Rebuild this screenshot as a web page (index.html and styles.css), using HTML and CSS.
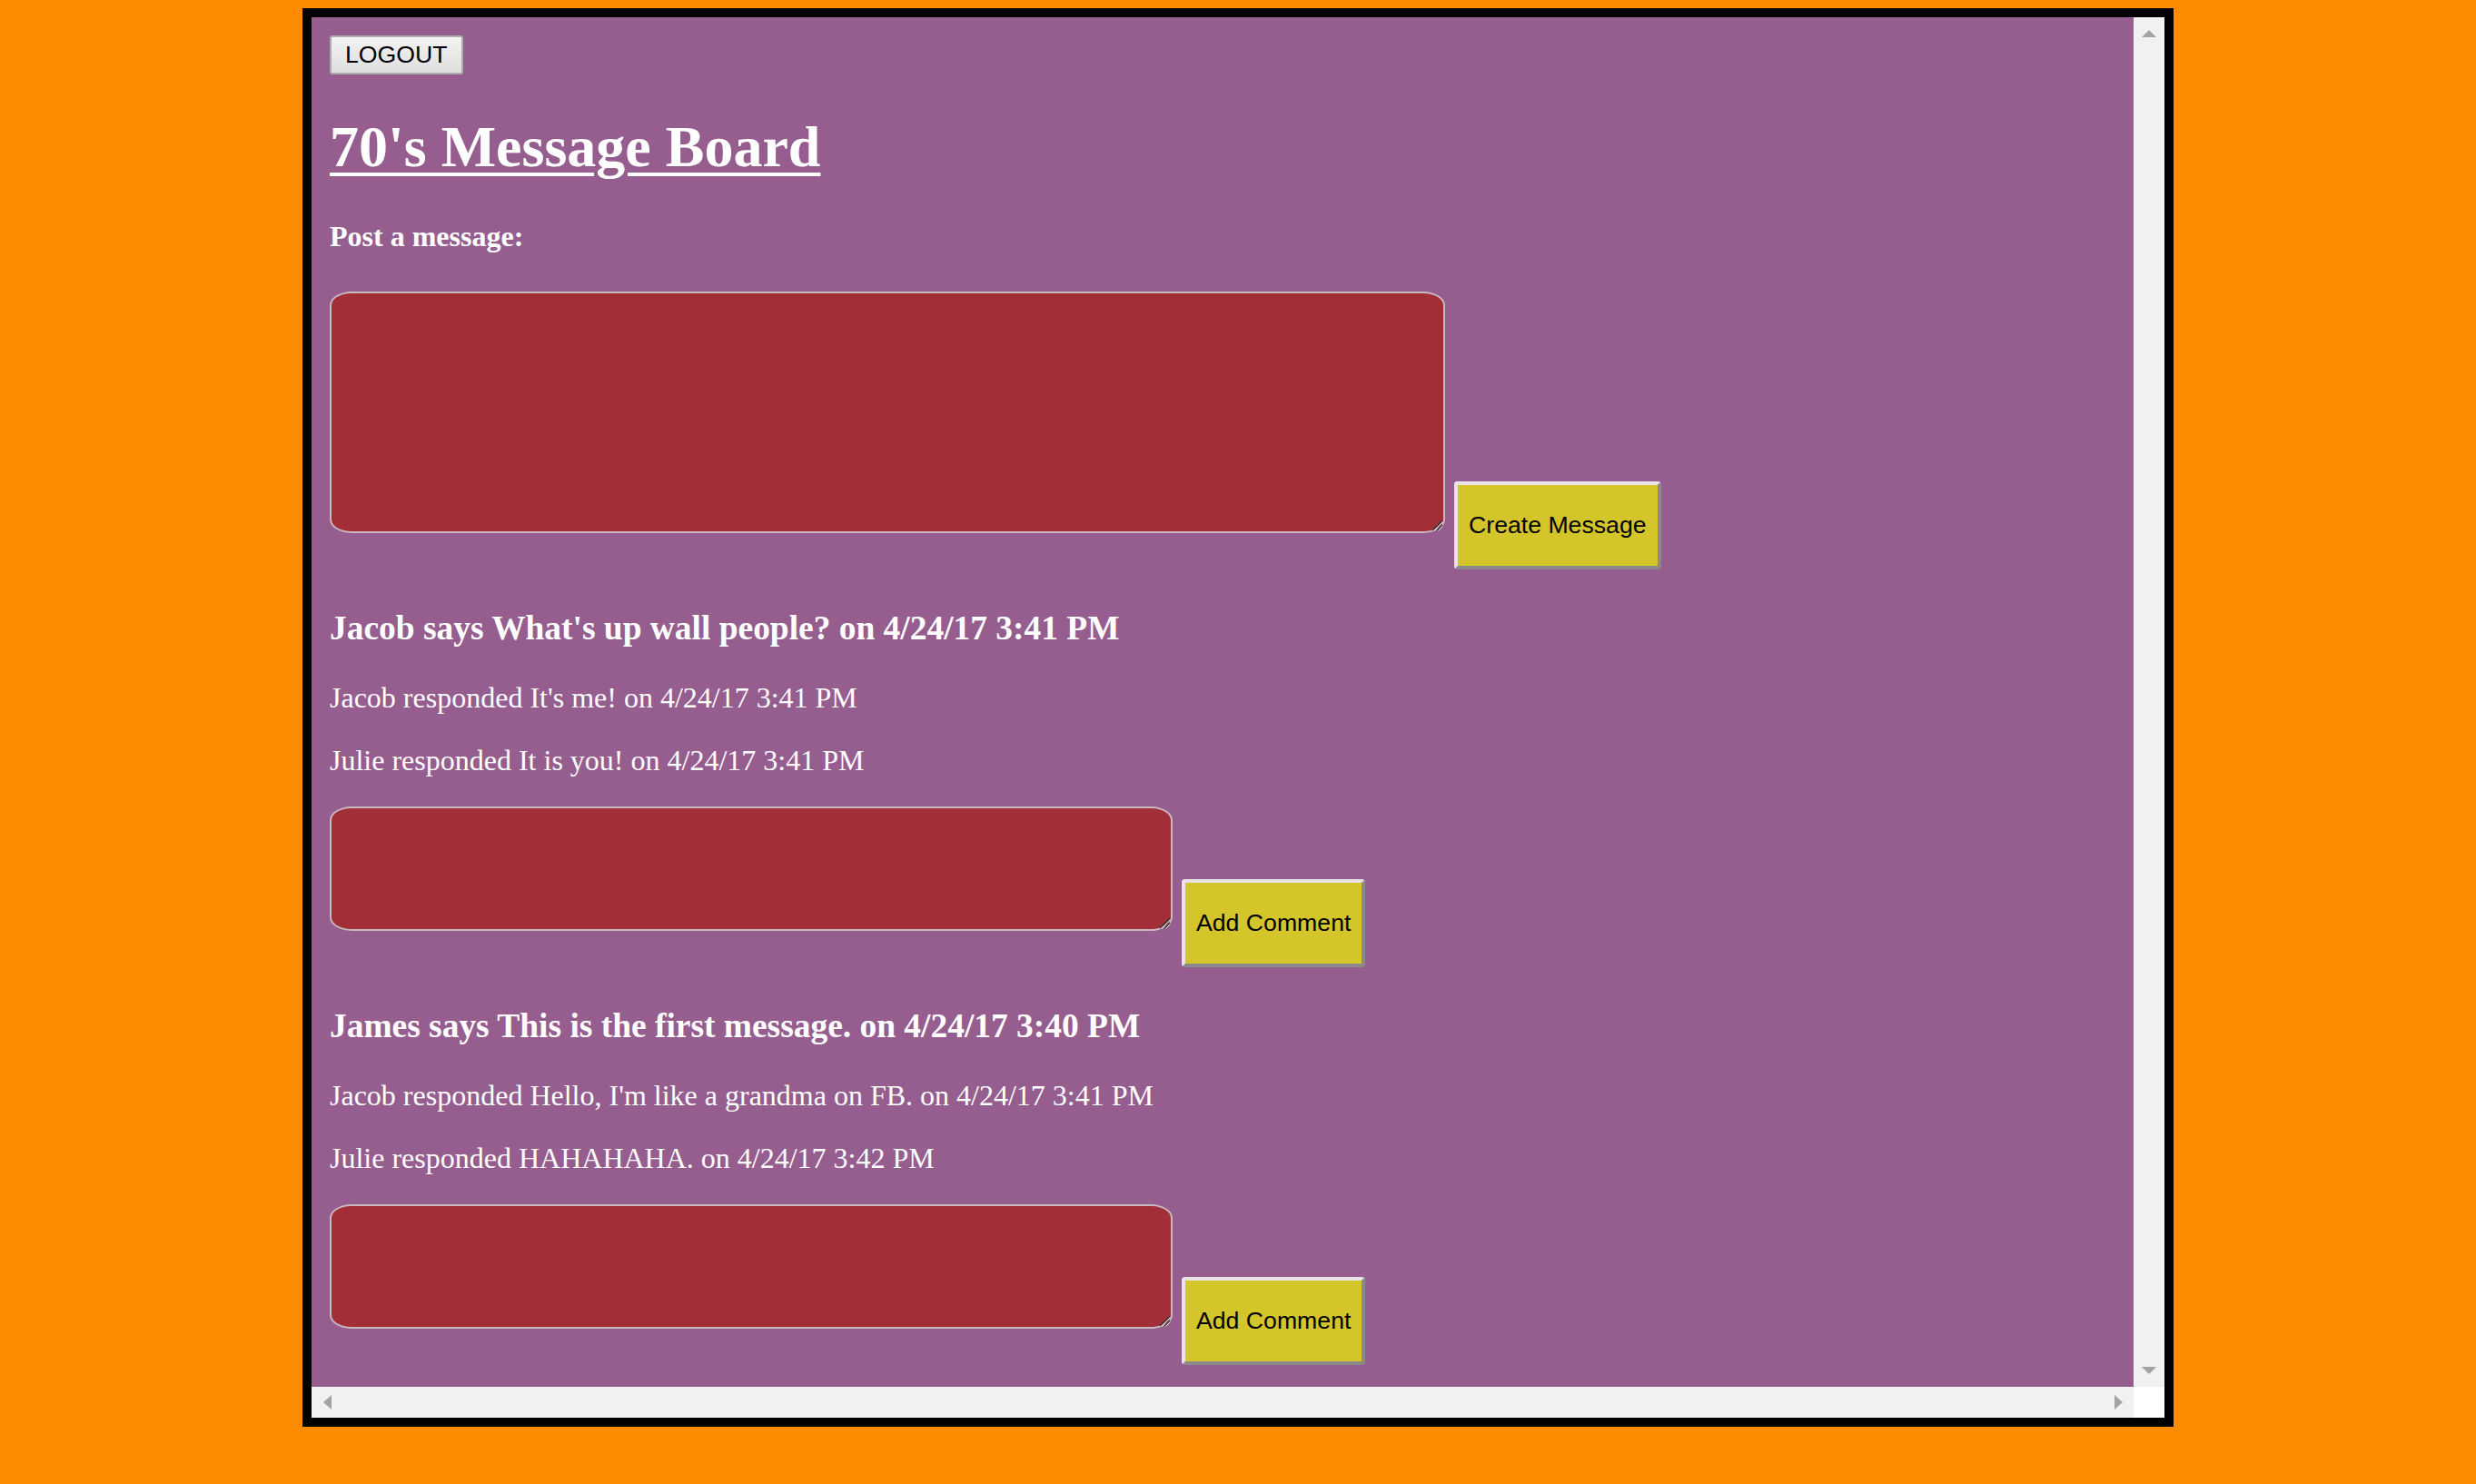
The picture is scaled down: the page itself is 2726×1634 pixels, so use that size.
FILE: index.html
```html
<!DOCTYPE html>
<html>
<head>
<meta charset="utf-8">
<title>70's Message Board</title>
<link rel="stylesheet" href="styles.css">
</head>
<body>
<div class="frame">
  <div class="viewport">
    <div class="topbar"><button class="logout">LOGOUT</button></div>
    <h1 class="title">70's Message Board</h1>
    <h4 class="label">Post a message:</h4>
    <form class="post-form"><span class="ta-wrap"><textarea class="ta-big"></textarea><svg class="grip" width="14" height="14" viewBox="0 0 14 14"><path d="M2 13 L13 2 M7 13 L13 7" stroke="#3a3a3a" stroke-width="1.5" fill="none"/><path d="M3.5 13.5 L13.5 3.5 M8.5 13.5 L13.5 8.5" stroke="#e8e8e8" stroke-width="1" fill="none"/></svg></span> <button type="button" class="btn-yellow">Create Message</button></form>

    <div class="message">
      <h3 class="msg-head">Jacob says What's up wall people? on 4/24/17 3:41 PM</h3>
      <p class="comment">Jacob responded It's me! on 4/24/17 3:41 PM</p>
      <p class="comment">Julie responded It is you! on 4/24/17 3:41 PM</p>
      <form class="comment-form"><span class="ta-wrap"><textarea class="ta-small"></textarea><svg class="grip" width="14" height="14" viewBox="0 0 14 14"><path d="M2 13 L13 2 M7 13 L13 7" stroke="#3a3a3a" stroke-width="1.5" fill="none"/><path d="M3.5 13.5 L13.5 3.5 M8.5 13.5 L13.5 8.5" stroke="#e8e8e8" stroke-width="1" fill="none"/></svg></span> <button type="button" class="btn-yellow">Add Comment</button></form>
    </div>

    <div class="message">
      <h3 class="msg-head">James says This is the first message. on 4/24/17 3:40 PM</h3>
      <p class="comment">Jacob responded Hello, I'm like a grandma on FB. on 4/24/17 3:41 PM</p>
      <p class="comment">Julie responded HAHAHAHA. on 4/24/17 3:42 PM</p>
      <form class="comment-form"><span class="ta-wrap"><textarea class="ta-small"></textarea><svg class="grip" width="14" height="14" viewBox="0 0 14 14"><path d="M2 13 L13 2 M7 13 L13 7" stroke="#3a3a3a" stroke-width="1.5" fill="none"/><path d="M3.5 13.5 L13.5 3.5 M8.5 13.5 L13.5 8.5" stroke="#e8e8e8" stroke-width="1" fill="none"/></svg></span> <button type="button" class="btn-yellow">Add Comment</button></form>
    </div>
  </div>
  <div class="vbar"><span class="arr arr-up"></span><span class="arr arr-down"></span></div>
  <div class="hbar"><span class="arr arr-left"></span><span class="arr arr-right"></span></div>
  <div class="corner"></div>
</div>
</body>
</html>
```
FILE: styles.css
```css
html, body {
  margin: 0;
  padding: 0;
}
body {
  background: #ff8c00;
  padding-top: 9px;
  font-family: "Liberation Serif", "Times New Roman", serif;
  font-size: 32px;
  color: #fff;
}
.frame {
  box-sizing: border-box;
  width: 2060px;
  margin: 0 auto;
  border: 10px solid #000;
  display: grid;
  grid-template-columns: 2006px 34px;
  grid-template-rows: 1508px 34px;
}
.viewport {
  background: #965e8f;
  overflow: hidden;
  padding: 20px;
}
.topbar {
  display: block;
}
.logout {
  display: block;
  box-sizing: border-box;
  height: 43px;
  margin: 0;
  font-family: "Liberation Sans", Arial, sans-serif;
  font-size: 26.67px;
  color: #000;
  padding: 0 15px;
  border: 2px solid #adadad;
  border-radius: 3px;
  background: linear-gradient(#f3f3f3, #dedede);
}
.title {
  font-size: 64px;
  font-weight: bold;
  margin: 42.88px 0;
  text-decoration: underline;
  text-decoration-thickness: 4px;
  text-underline-offset: 7px;
}
.label {
  font-size: 32px;
  font-weight: bold;
  margin: 42.56px 0;
}
.post-form, .comment-form {
  margin: 0;
  padding-bottom: 5px;
}
.ta-wrap {
  position: relative;
  display: inline-block;
  vertical-align: baseline;
}
textarea {
  display: block;
  box-sizing: border-box;
  margin: 0;
  background: #a22e37;
  border: 2px solid #c9b8bd;
  border-radius: 24px / 15px;
  padding: 4px;
  color: #fff;
  font-family: "Liberation Mono", monospace;
  font-size: 26px;
  outline: none;
  resize: none;
}
.grip {
  position: absolute;
  right: 2px;
  bottom: 2px;
}
.ta-big {
  width: 1228px;
  height: 266px;
}
.ta-small {
  width: 928px;
  height: 137px;
}
.btn-yellow {
  box-sizing: border-box;
  height: 97px;
  margin: 0 0 0 2px;
  padding: 0 12px;
  font-family: "Liberation Sans", Arial, sans-serif;
  font-size: 26.67px;
  color: #000;
  background: #d4c52a;
  border: 4px solid;
  border-color: #e9e3e9 #8c888c #8c888c #e9e3e9;
  border-radius: 4px;
}
.msg-head {
  font-size: 37.44px;
  font-weight: bold;
  margin: 37.44px 0;
}
.comment {
  margin: 32px 0;
}
.vbar {
  background: #f1f1f1;
  display: flex;
  flex-direction: column;
  align-items: center;
  justify-content: space-between;
  padding: 14px 0;
}
.hbar {
  background: #f1f1f1;
  display: flex;
  align-items: center;
  justify-content: space-between;
  padding: 0 12px 0 13px;
}
.corner {
  background: #fff;
}
.arr {
  display: block;
  width: 0;
  height: 0;
}
.arr-up {
  border-left: 8px solid transparent;
  border-right: 8px solid transparent;
  border-bottom: 8px solid #a3a3a3;
}
.arr-down {
  border-left: 8px solid transparent;
  border-right: 8px solid transparent;
  border-top: 8px solid #a3a3a3;
}
.arr-left {
  border-top: 8px solid transparent;
  border-bottom: 8px solid transparent;
  border-right: 9px solid #a3a3a3;
}
.arr-right {
  border-top: 8px solid transparent;
  border-bottom: 8px solid transparent;
  border-left: 9px solid #a3a3a3;
}
```
